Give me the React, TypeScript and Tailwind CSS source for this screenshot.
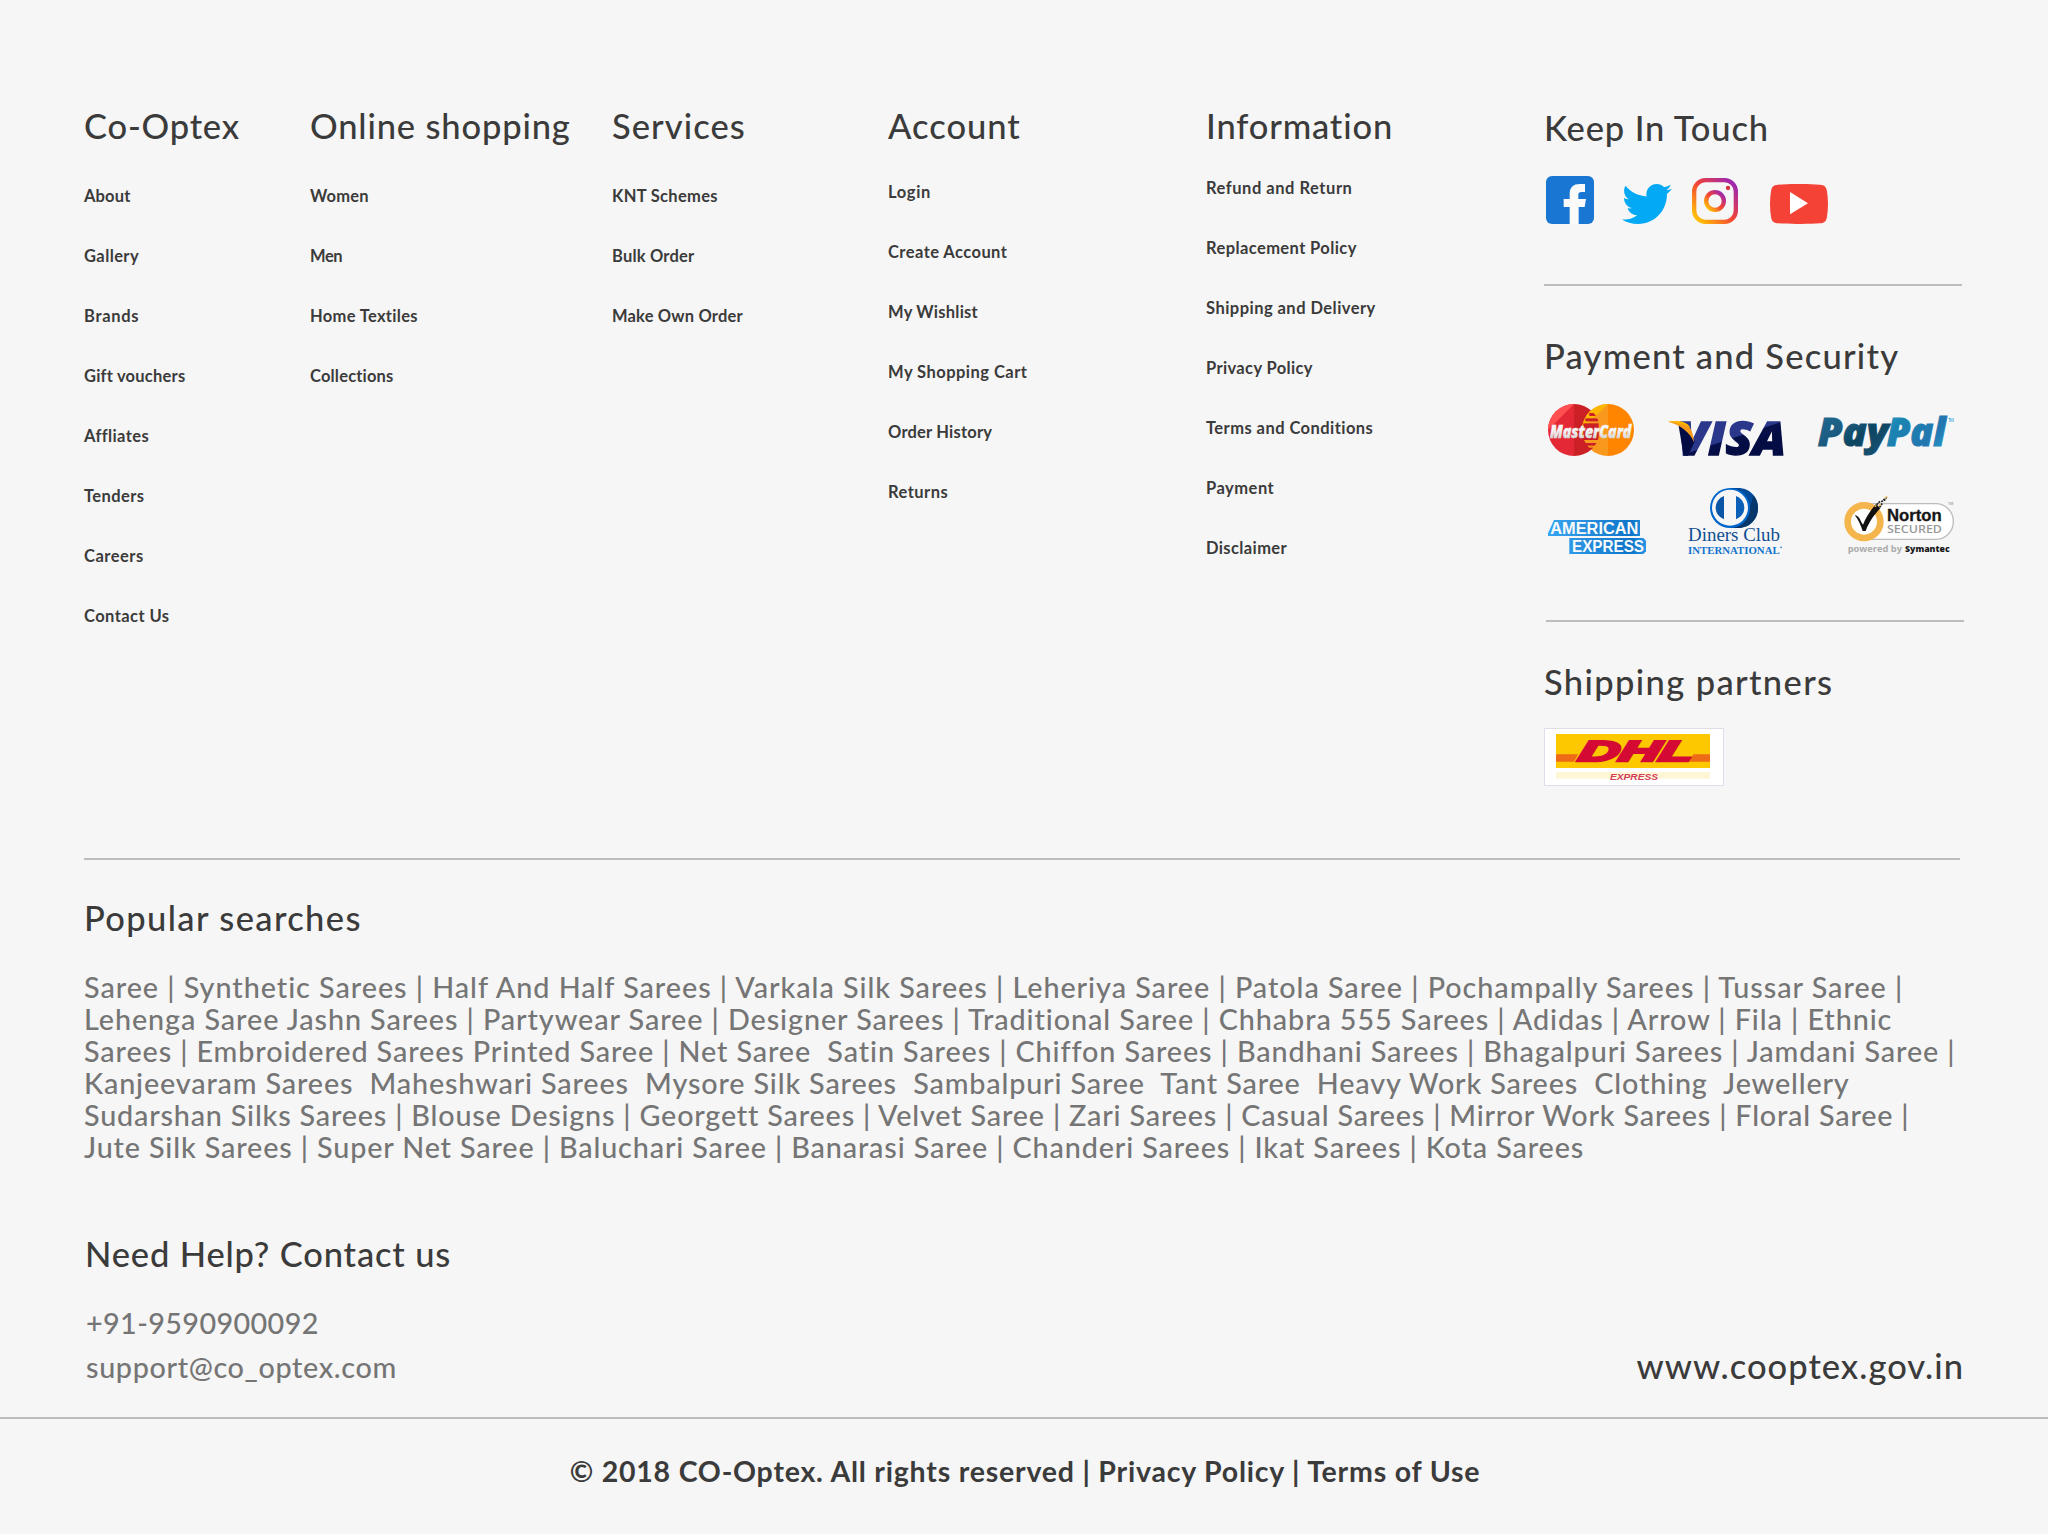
import React from "react";

type Item = [label: string, tracking: string];

type Column = {
  title: string;
  titleTracking: string;
  width: string;
  listOffset: string;
  items: Item[];
};

const columns: Column[] = [
  {
    title: "Co-Optex",
    titleTracking: "tracking-[0.8px]",
    width: "w-[226px]",
    listOffset: "mt-10",
    items: [
      ["About", "tracking-[0.15px]"],
      ["Gallery", "tracking-[0.4px]"],
      ["Brands", "tracking-[0.7px]"],
      ["Gift vouchers", "tracking-[0.22px]"],
      ["Affliates", "tracking-[0.38px]"],
      ["Tenders", "tracking-[0.41px]"],
      ["Careers", "tracking-[0.5px]"],
      ["Contact Us", "tracking-[0.42px]"],
    ],
  },
  {
    title: "Online shopping",
    titleTracking: "tracking-[0.84px]",
    width: "w-[302px]",
    listOffset: "mt-10",
    items: [
      ["Women", "tracking-[0.21px]"],
      ["Men", "tracking-[-0.4px]"],
      ["Home Textiles", "tracking-[0.32px]"],
      ["Collections", "tracking-[0.18px]"],
    ],
  },
  {
    title: "Services",
    titleTracking: "tracking-[1.05px]",
    width: "w-[276px]",
    listOffset: "mt-10",
    items: [
      ["KNT Schemes", "tracking-[0.32px]"],
      ["Bulk Order", "tracking-[0.2px]"],
      ["Make Own Order", "tracking-[0.18px]"],
    ],
  },
  {
    title: "Account",
    titleTracking: "tracking-[0.98px]",
    width: "w-[318px]",
    listOffset: "mt-9",
    items: [
      ["Login", "tracking-[0.65px]"],
      ["Create Account", "tracking-[0.44px]"],
      ["My Wishlist", "tracking-[0.24px]"],
      ["My Shopping Cart", "tracking-[0.46px]"],
      ["Order History", "tracking-[0.2px]"],
      ["Returns", "tracking-[0.45px]"],
    ],
  },
  {
    title: "Information",
    titleTracking: "tracking-[0.84px]",
    width: "w-[338px]",
    listOffset: "mt-8",
    items: [
      ["Refund and Return", "tracking-[0.53px]"],
      ["Replacement Policy", "tracking-[0.4px]"],
      ["Shipping and Delivery", "tracking-[0.46px]"],
      ["Privacy Policy", "tracking-[0.36px]"],
      ["Terms and Conditions", "tracking-[0.44px]"],
      ["Payment", "tracking-[0.5px]"],
      ["Disclaimer", "tracking-[0.38px]"],
    ],
  },
];

const searches: Item[] = [
  ["Saree | Synthetic Sarees | Half And Half Sarees | Varkala Silk Sarees | Leheriya Saree | Patola Saree | Pochampally Sarees | Tussar Saree |", "tracking-[0.962px]"],
  ["Lehenga Saree Jashn Sarees | Partywear Saree | Designer Sarees | Traditional Saree | Chhabra 555 Sarees | Adidas | Arrow | Fila | Ethnic", "tracking-[0.922px]"],
  ["Sarees | Embroidered Sarees Printed Saree | Net Saree  Satin Sarees | Chiffon Sarees | Bandhani Sarees | Bhagalpuri Sarees | Jamdani Saree |", "tracking-[0.886px]"],
  ["Kanjeevaram Sarees  Maheshwari Sarees  Mysore Silk Sarees  Sambalpuri Saree  Tant Saree  Heavy Work Sarees  Clothing  Jewellery", "tracking-[0.846px]"],
  ["Sudarshan Silks Sarees | Blouse Designs | Georgett Sarees | Velvet Saree | Zari Sarees | Casual Sarees | Mirror Work Sarees | Floral Saree |", "tracking-[0.808px]"],
  ["Jute Silk Sarees | Super Net Saree | Baluchari Saree | Banarasi Saree | Chanderi Sarees | Ikat Sarees | Kota Sarees", "tracking-[0.862px]"],
];

function Heading({ children, className }: { children: React.ReactNode; className: string }) {
  return (
    <h2 className={`whitespace-nowrap text-[34.5px] leading-10 font-medium text-[#3b3b3b] ${className}`}>{children}</h2>
  );
}

function FacebookIcon() {
  return (
    <svg className="h-12 w-12" viewBox="0 0 144 144">
      <rect width="144" height="144" rx="18" fill="#1976d2" />
      <path
        d="M71 144V93H53V69h18V54c0-20 11-30 30-30h16v24h-10c-8 0-10 3-10 9v12h23l-4 24H98v51z"
        fill="#fafafa"
      />
    </svg>
  );
}

function TwitterIcon() {
  return (
    <svg className="h-10 w-[50px]" viewBox="0 48 512 416" preserveAspectRatio="none">
      <path
        fill="#03a9f4"
        d="M459.37 151.716c.325 4.548.325 9.097.325 13.645 0 138.72-105.583 298.558-298.558 298.558-59.452 0-114.68-17.219-161.137-47.106 8.447.974 16.568 1.299 25.34 1.299 49.055 0 94.213-16.568 130.274-44.832-46.132-.975-84.792-31.188-98.112-72.772 6.498.974 12.995 1.624 19.818 1.624 9.421 0 18.843-1.3 27.614-3.573-48.081-9.747-84.143-51.98-84.143-102.985v-1.299c13.969 7.797 30.214 12.67 47.431 13.319-28.264-18.843-46.781-51.005-46.781-87.391 0-19.492 5.197-37.36 14.294-52.954 51.655 63.675 129.3 105.258 216.365 109.807-1.624-7.797-2.599-15.918-2.599-24.04 0-57.828 46.782-104.934 104.934-104.934 30.213 0 57.502 12.67 76.67 33.137 23.715-4.548 46.456-13.32 66.599-25.34-7.798 24.366-24.366 44.833-46.132 57.827 21.117-2.273 41.584-8.122 60.426-16.243-14.292 20.791-32.161 39.308-52.628 54.253z"
      />
    </svg>
  );
}

function InstagramIcon() {
  return (
    <svg className="h-[46px] w-[46px]" viewBox="0 0 138 138">
      <defs>
        <linearGradient id="ig" gradientUnits="userSpaceOnUse" x1="14" y1="124" x2="124" y2="14">
          <stop offset="0" stopColor="#ffc107" />
          <stop offset="0.5" stopColor="#f44336" />
          <stop offset="1" stopColor="#9c27b0" />
        </linearGradient>
        <linearGradient id="igRing" gradientUnits="userSpaceOnUse" x1="46" y1="92" x2="92" y2="46">
          <stop offset="0" stopColor="#ffc107" />
          <stop offset="0.5" stopColor="#f44336" />
          <stop offset="1" stopColor="#9c27b0" />
        </linearGradient>
      </defs>
      <rect x="6.5" y="6.5" width="125" height="125" rx="34" fill="none" stroke="url(#ig)" strokeWidth="13" />
      <circle cx="69" cy="69" r="26.5" fill="none" stroke="url(#igRing)" strokeWidth="13" />
      <circle cx="108" cy="30" r="6.5" fill="#d9303f" />
    </svg>
  );
}

function YoutubeIcon() {
  return (
    <svg className="h-10 w-[58px]" viewBox="0 0 174 120">
      <path
        d="M24 2C60-.7 114-.7 150 2c14 1 19 7 21 20 4 24 4 52 0 76-2 13-7 19-21 20-36 2.700-90 2.700-126 0C10 117 5 111 3 98c-4-24-4-52 0-76C5 9 10 3 24 2z"
        fill="#f44336"
      />
      <path d="M60 24v67l54-33.500z" fill="#fff" />
    </svg>
  );
}

function MasterCardLogo() {
  return (
    <svg className="h-[52px] w-[86px] overflow-visible" viewBox="0 0 258 156">
      <defs>
        <clipPath id="mcRed"><circle cx="78" cy="78" r="78" /></clipPath>
        <clipPath id="mcYellow"><circle cx="180" cy="78" r="78" /></clipPath>
        <linearGradient id="mcText" x1="0" y1="0" x2="0" y2="1">
          <stop offset="0.5" stopColor="#f5f5f5" />
          <stop offset="0.85" stopColor="#d2d2d2" />
        </linearGradient>
      </defs>
      <g clipPath="url(#mcRed)">
        <rect width="78" height="156" fill="#e52836" />
        <rect x="78" width="80" height="156" fill="#cb2026" />
        <path d="M0 78L78 0H0z" fill="#ff5050" />
      </g>
      <g clipPath="url(#mcYellow)">
        <rect x="100" width="80" height="156" fill="#f8981d" />
        <rect x="180" width="80" height="156" fill="#ff8500" />
        <path d="M100 78L180 0h-80z" fill="#ffb600" />
      </g>
      <g clipPath="url(#mcRed)" fill="#cb2026">
        <rect x="124" y="27" width="20" height="9" />
        <rect x="112" y="43" width="40" height="9" />
        <rect x="106" y="58" width="46" height="50" />
        <rect x="110" y="117" width="38" height="8" />
        <rect x="116" y="131" width="26" height="8" />
      </g>
      <text
        x="6"
        y="102"
        fontFamily="Open Sans, sans-serif"
        fontWeight="800"
        fontStyle="italic"
        fontSize="55"
        fill="url(#mcText)"
        stroke="url(#mcText)"
        strokeWidth="1.5"
        textLength="244"
        lengthAdjust="spacingAndGlyphs"
      >
        MasterCard
      </text>
    </svg>
  );
}

function VisaLogo() {
  return (
    <svg className="h-[37px] w-[116px] overflow-visible" viewBox="0 0 348 111">
      <defs>
        <linearGradient id="visa" gradientUnits="userSpaceOnUse" x1="150" y1="20" x2="176" y2="98">
          <stop offset="0" stopColor="#2a378b" />
          <stop offset="0.58" stopColor="#2a378b" />
          <stop offset="0.62" stopColor="#07104a" />
          <stop offset="1" stopColor="#040c44" />
        </linearGradient>
      </defs>
      <text
        x="28"
        y="108"
        fontFamily="Open Sans, sans-serif"
        fontWeight="800"
        fontStyle="italic"
        fontSize="140"
        fill="url(#visa)"
        stroke="url(#visa)"
        strokeWidth="4"
        textLength="326"
        lengthAdjust="spacingAndGlyphs"
      >
        VISA
      </text>
      <path d="M31 15L66 29 80 68 60 110H47z" fill="#040c44" />
      <path d="M0 8C36 4 56 8 66 26c7 12 11 27 12 44C66 40 40 19 0 8z" fill="#f79a1c" />
      <path d="M0 8C36 4 56 8 66 24 50 18 30 12 0 8z" fill="#ffb600" />
    </svg>
  );
}

function PayPalLogo() {
  return (
    <svg className="h-[38px] w-[136px] overflow-visible" viewBox="0 0 408 114">
      <defs>
        <linearGradient id="payLeft" x1="0" y1="0" x2="1" y2="0.9">
          <stop offset="0" stopColor="#21709b" />
          <stop offset="0.4" stopColor="#1c5b80" />
          <stop offset="0.62" stopColor="#0c4560" />
          <stop offset="1" stopColor="#1b5377" />
        </linearGradient>
        <linearGradient id="payRight" x1="0" y1="0" x2="1" y2="0.8">
          <stop offset="0" stopColor="#2fa3d2" />
          <stop offset="0.3" stopColor="#1a84b1" />
          <stop offset="0.75" stopColor="#2376b0" />
          <stop offset="1" stopColor="#259bcb" />
        </linearGradient>
      </defs>
      <g fontFamily="Open Sans, sans-serif" fontWeight="800" fontStyle="italic" fontSize="115" strokeWidth="3">
        <text x="-1" y="85" fill="url(#payLeft)" stroke="url(#payLeft)" textLength="212" lengthAdjust="spacingAndGlyphs">
          Pay
        </text>
        <text x="206" y="85" fill="url(#payRight)" stroke="url(#payRight)" textLength="177" lengthAdjust="spacingAndGlyphs">
          Pal
        </text>
      </g>
      <text x="390" y="12" fontFamily="Liberation Sans, sans-serif" fontSize="15" fill="#2fa3d2" textLength="18">TM</text>
    </svg>
  );
}

function AmexLogo() {
  return (
    <svg className="h-[34px] w-[98px] overflow-visible" viewBox="0 0 294 102">
      <defs>
        <linearGradient id="amex" gradientUnits="userSpaceOnUse" x1="0" y1="0" x2="294" y2="0">
          <stop offset="0" stopColor="#35a6f2" />
          <stop offset="0.3" stopColor="#2c93e2" />
          <stop offset="0.85" stopColor="#0d74c9" />
          <stop offset="1" stopColor="#2a96e6" />
        </linearGradient>
      </defs>
      <path d="M18 0h258v48H0v-8z" fill="url(#amex)" />
      <path d="M64 54h222l8 8v32l-8 8H64z" fill="url(#amex)" />
      <g fontFamily="Liberation Sans, sans-serif" fontWeight="700" fontSize="48" fill="#fafafa">
        <text x="7" y="41" textLength="264" lengthAdjust="spacingAndGlyphs">AMERICAN</text>
        <text x="72" y="95" textLength="216" lengthAdjust="spacingAndGlyphs">EXPRESS</text>
      </g>
    </svg>
  );
}

function DinersLogo() {
  return (
    <svg className="h-[66px] w-[94px] overflow-visible" viewBox="0 0 282 198">
      <path d="M126 0h24c34 0 60 26 60 60s-26 60-60 60h-24z" fill="#004a97" />
      <path d="M196 22c9 10 14 23 14 38 0 34-26 60-60 60h-24c30-8 60-40 70-98z" fill="#07366b" />
      <circle cx="126" cy="60" r="60" fill="#0066cb" />
      <circle cx="126" cy="59" r="54" fill="#f6f6f6" />
      <path d="M108 24a37 37 0 0 0 0 70z" fill="#0a55a5" />
      <path d="M144 24a37 37 0 0 1 0 70z" fill="#0a5fb8" />
      <text x="0" y="160" fontFamily="Liberation Serif, serif" fontSize="55" fill="#0f4f94" textLength="276" lengthAdjust="spacingAndGlyphs">
        Diners Club
      </text>
      <text x="0" y="197" fontFamily="Liberation Serif, serif" fontWeight="700" fontSize="33" fill="#1273cc" textLength="275" lengthAdjust="spacingAndGlyphs">
        INTERNATIONAL
      </text>
      <circle cx="279" cy="178" r="2.500" fill="#1273cc" />
    </svg>
  );
}

function NortonLogo() {
  return (
    <svg className="h-[58px] w-[110px] overflow-visible" viewBox="0 0 330 174">
      <rect x="30" y="23" width="298" height="107" rx="53" fill="#fff" stroke="#bdbdbd" strokeWidth="4" />
      <circle cx="60" cy="77" r="49" fill="#fff" stroke="#f5b54d" strokeWidth="20" />
      <path d="M32 57c9 2 15 9 18 17 2 4 4 8 7 12C66 64 80 42 96 24l13 13C92 54 75 78 65 105h-9C50 88 44 72 32 57z" fill="#111" />
      <path d="M98 26l10-10M107 34l8-12M112 18l10-9M120 14l8-10" stroke="#222" strokeWidth="5" strokeDasharray="6 2" />
      <path d="M104 30l6-6M122 6l8-4M92 32l5-3" stroke="#f5b54d" strokeWidth="4" />
      <text x="129" y="75" fontFamily="Liberation Sans, sans-serif" fontWeight="700" fontSize="52" fill="#161616" stroke="#161616" strokeWidth="1" textLength="164" lengthAdjust="spacingAndGlyphs">
        Norton
      </text>
      <text x="129" y="112" fontFamily="Open Sans, sans-serif" fontWeight="600" fontSize="34" fill="#989898" textLength="165" lengthAdjust="spacingAndGlyphs">
        SECURED
      </text>
      <text x="311" y="27" fontFamily="Liberation Sans, sans-serif" fontSize="12" fill="#8c8c8c">TM</text>
      <text x="11" y="169" fontFamily="Open Sans, sans-serif" fontWeight="700" fontSize="26" fill="#ababab" textLength="163" lengthAdjust="spacingAndGlyphs">
        powered by
      </text>
      <text x="183" y="169" fontFamily="Open Sans, sans-serif" fontWeight="800" fontSize="26" fill="#1a1a1a" textLength="134" lengthAdjust="spacingAndGlyphs">
        Symantec
      </text>
    </svg>
  );
}

function DhlLogo() {
  return (
    <svg className="h-[58px] w-[180px] overflow-visible" viewBox="0 0 540 174">
      <rect x="1.500" y="1.500" width="537" height="171" fill="#fff" stroke="#e0dcea" strokeWidth="3" />
      <rect x="36" y="18" width="462" height="102" fill="#fdc800" />
      <path d="M36 79h66l-12 22H36zM448 79h50v22h-62z" fill="#ef6a17" />
      <rect x="36" y="132" width="462" height="20" fill="#fff6d6" />
      <g transform="translate(100 99) skewX(-14)">
        <text
          x="0"
          y="0"
          fontFamily="Liberation Sans, sans-serif"
          fontWeight="700"
          fontStyle="italic"
          fontSize="86"
          fill="#d40a35"
          stroke="#d40a35"
          strokeWidth="8"
          textLength="342"
          lengthAdjust="spacingAndGlyphs"
        >
          DHL
        </text>
      </g>
      <text
        x="198"
        y="155"
        fontFamily="Liberation Sans, sans-serif"
        fontWeight="700"
        fontStyle="italic"
        fontSize="27"
        fill="#d2405c"
        textLength="144"
        lengthAdjust="spacingAndGlyphs"
      >
        EXPRESS
      </text>
    </svg>
  );
}

export default function App() {
  return (
    <footer className="flex h-[1534px] w-[2048px] flex-col overflow-hidden bg-[#f6f6f6] font-['Lato',sans-serif]">
      <div className="flex h-[858px] shrink-0 pt-[106px] pl-[84px]">
        {columns.map((column) => (
          <nav key={column.title} className={`shrink-0 ${column.width}`}>
            <Heading className={column.titleTracking}>{column.title}</Heading>
            <ul className={`flex flex-col gap-10 ${column.listOffset}`}>
              {column.items.map(([label, tracking]) => (
                <li key={label} className={`text-[16.5px] leading-5 font-bold text-[#3b3b3b] ${tracking}`}>
                  {label}
                </li>
              ))}
            </ul>
          </nav>
        ))}

        <div className="flex w-[420px] shrink-0 flex-col pt-0.5">
          <Heading className="tracking-[0.85px]">Keep In Touch</Heading>
          <div className="mt-7 flex h-12 items-end pl-0.5">
            <FacebookIcon />
            <div className="ml-7"><TwitterIcon /></div>
            <div className="ml-5"><InstagramIcon /></div>
            <div className="ml-8"><YoutubeIcon /></div>
          </div>
          <div className="mt-[60px] h-0.5 w-[418px] bg-[#bdbdbd]" />

          <Heading className="mt-[50px] tracking-[1.22px]">Payment and Security</Heading>
          <div className="mt-7 flex h-[52px] items-end gap-[34px] pl-1">
            <MasterCardLogo />
            <VisaLogo />
            <PayPalLogo />
          </div>
          <div className="mt-8 flex h-[66px] items-end pl-1">
            <AmexLogo />
            <div className="ml-[42px]"><DinersLogo /></div>
            <div className="ml-[62px]"><NortonLogo /></div>
          </div>
          <div className="mt-[66px] ml-0.5 h-0.5 w-[418px] bg-[#bdbdbd]" />

          <Heading className="mt-10 tracking-[1.36px]">Shipping partners</Heading>
          <div className="mt-[26px]"><DhlLogo /></div>
        </div>
      </div>

      <div className="ml-[84px] h-0.5 w-[1876px] shrink-0 bg-[#bdbdbd]" />

      <section className="pt-[38px] pl-[84px]">
        <Heading className="tracking-[1.36px]">Popular searches</Heading>
        <div className="mt-[33px]">
          {searches.map(([line, tracking]) => (
            <p key={line} className={`text-[28.75px] leading-8 font-medium whitespace-pre text-[#757575] ${tracking}`}>
              {line}
            </p>
          ))}
        </div>
      </section>

      <section className="mt-[71px] flex items-end justify-between pr-[84px] pl-[86px]">
        <div>
          <Heading className="-ml-px tracking-[0.84px]">Need Help? Contact us</Heading>
          <div className="mt-[27px] text-[28.75px] leading-11 font-medium text-[#757575]">
            <p className="tracking-[0.38px]">+91-9590900092</p>
            <p className="tracking-[0.64px]">support@co_optex.com</p>
          </div>
        </div>
        <Heading className="mb-[3px] tracking-[1.02px]">www.cooptex.gov.in</Heading>
      </section>

      <div className="mt-7 h-0.5 shrink-0 bg-[#bdbdbd]" />

      <p className="mt-9 pl-0.5 text-center text-[28.5px] leading-8 font-bold tracking-[0.78px] text-[#3b3b3b]">
        © 2018 CO-Optex. All rights reserved | Privacy Policy | Terms of Use
      </p>
    </footer>
  );
}
